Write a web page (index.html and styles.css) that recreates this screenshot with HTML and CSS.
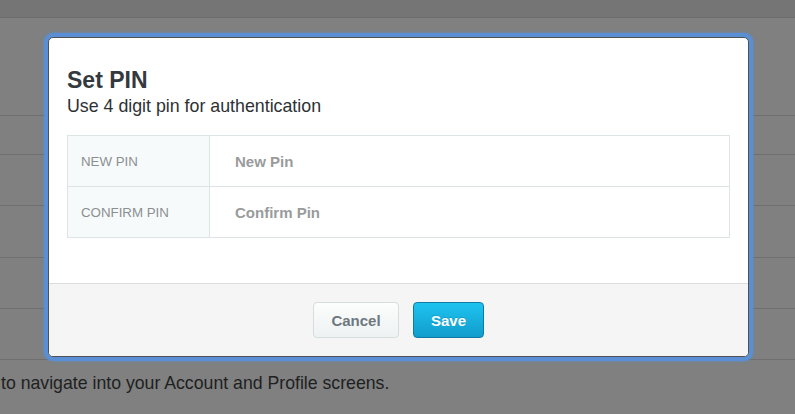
FILE: index.html
```html
<html>
<head>
    <title>Set PIN</title>
    <link rel="stylesheet" href="styles.css">
</head>
<body>
    <div class="page">
        <div class="topbar"></div>
        <section class="rows">
            <div class="row row-first"></div>
            <div class="row row-short"></div>
            <div class="row"></div>
            <div class="row row-tall"></div>
            <div class="row"></div>
            <div class="row"></div>
        </section>
        <p class="page-note">to navigate into your Account and Profile screens.</p>
    </div>

    <div class="modal">
        <div class="modal-body">
            <h2 class="modal-title">Set PIN</h2>
            <div class="modal-subtitle">Use 4 digit pin for authentication</div>
            <div class="pin-table">
                <div class="pin-row">
                    <div class="pin-label">NEW PIN</div>
                    <input class="pin-input" type="password" placeholder="New Pin">
                </div>
                <div class="pin-row">
                    <div class="pin-label">CONFIRM PIN</div>
                    <input class="pin-input" type="password" placeholder="Confirm Pin">
                </div>
            </div>
        </div>
        <div class="modal-footer">
            <button class="btn btn-cancel">Cancel</button>
            <button class="btn btn-save">Save</button>
        </div>
    </div>
</body>
</html>
```

FILE: styles.css
```css
html, body {
    margin: 0;
    padding: 0;
    width: 100%;
    height: 100%;
    overflow: hidden;
    background: #7f807f;
    font-family: "Liberation Sans", Arial, sans-serif;
}

.page {
    width: 100%;
}

.topbar {
    height: 17px;
    background: #747574;
    border-bottom: 1px solid #6b6c6b;
}

.row {
    height: 50px;
    border-bottom: 1px solid #6e6f6e;
}

.row-first {
    height: 97px;
}

.row-short {
    height: 38px;
}

.row-tall {
    height: 51px;
}

.page-note {
    margin: 12px 0 0 1px;
    font-size: 17.7px;
    line-height: 22px;
    color: #1e1f1f;
}

/* dialog */

.modal {
    position: absolute;
    left: 48px;
    top: 37px;
    width: 701px;
    height: 320px;
    box-sizing: border-box;
    background: #fff;
    border: 1px solid #4f5152;
    border-radius: 5px;
    box-shadow: 0 0 0 4px #5a8fd5, 0 0 2px 5px rgba(90, 143, 213, 0.45);
    display: flex;
    flex-direction: column;
    overflow: hidden;
}

.modal-body {
    flex: 1;
    padding: 28px 18px 0;
}

.modal-title {
    margin: 0;
    font-size: 23px;
    line-height: 29px;
    font-weight: bold;
    color: #333a3f;
}

.modal-subtitle {
    font-size: 17.8px;
    line-height: 22px;
    color: #2d3134;
}

.pin-table {
    margin-top: 18px;
    border: 1px solid #dde4e6;
}

.pin-row {
    display: flex;
    height: 50px;
}

.pin-row + .pin-row {
    border-top: 1px solid #dde4e6;
}

.pin-label {
    width: 128px;
    padding-left: 13px;
    display: flex;
    align-items: center;
    background: #f7fafb;
    border-right: 1px solid #dde4e6;
    font-size: 13.3px;
    color: #8b8f91;
}

.pin-input {
    flex: 1;
    border: none;
    outline: none;
    padding: 0 0 0 25px;
    margin: 0;
    background: transparent;
    font-family: "Liberation Sans", Arial, sans-serif;
    font-size: 15px;
    font-weight: bold;
    color: #444;
}

.pin-input::placeholder {
    color: #999b9c;
    opacity: 1;
}

.modal-footer {
    height: 72px;
    background: #f5f5f5;
    border-top: 1px solid #dcdcdc;
    display: flex;
    justify-content: center;
    align-items: center;
    gap: 14px;
}

.btn {
    height: 36px;
    border-radius: 4px;
    font-family: "Liberation Sans", Arial, sans-serif;
    font-size: 15px;
    font-weight: bold;
    padding: 0;
    cursor: pointer;
}

.btn-cancel {
    width: 86px;
    background: linear-gradient(#fcfdfd, #eef2f2);
    border: 1px solid #d5dddd;
    color: #6d7880;
}

.btn-save {
    width: 71px;
    background: linear-gradient(#1ec3f0, #119dcc);
    border: 1px solid #0f7ba4;
    color: #fff;
    text-shadow: 0 -1px 0 rgba(0, 0, 0, 0.15);
}
```
